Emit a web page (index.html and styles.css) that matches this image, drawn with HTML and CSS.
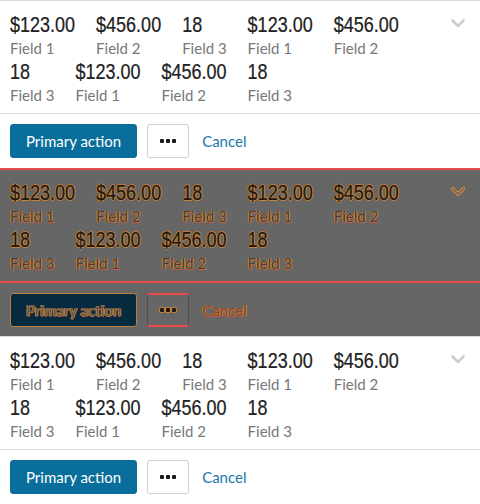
FILE: index.html
```html
<!DOCTYPE html>
<html lang="en">
<head>
<meta charset="utf-8">
<title>Summary cards</title>
<link rel="stylesheet" href="styles.css">
</head>
<body>
<div class="panel">
  <div class="body">
    <div class="fields">
      <div class="field"><div class="value">$123.00</div><div class="label">Field 1</div></div>
      <div class="field"><div class="value">$456.00</div><div class="label">Field 2</div></div>
      <div class="field"><div class="value">18</div><div class="label">Field 3</div></div>
      <div class="field"><div class="value">$123.00</div><div class="label">Field 1</div></div>
      <div class="field"><div class="value">$456.00</div><div class="label">Field 2</div></div>
      <div class="field"><div class="value">18</div><div class="label">Field 3</div></div>
      <div class="field"><div class="value">$123.00</div><div class="label">Field 1</div></div>
      <div class="field"><div class="value">$456.00</div><div class="label">Field 2</div></div>
      <div class="field"><div class="value">18</div><div class="label">Field 3</div></div>
    </div>
    <button class="toggle" aria-label="Expand"><svg width="14" height="9" viewBox="0 0 14 9"><polyline class="chev-outer" points="1.5,1.5 7,7 12.5,1.5"/><polyline class="chev" points="1.5,1.5 7,7 12.5,1.5"/></svg></button>
  </div>
  <div class="footer">
    <button class="btn-primary">Primary action</button>
    <button class="btn-more" aria-label="More"><span class="dot"></span><span class="dot"></span><span class="dot"></span></button>
    <button class="btn-link">Cancel</button>
  </div>
</div>

<div class="panel debug">
  <div class="body">
    <div class="fields">
      <div class="field"><div class="value">$123.00</div><div class="label">Field 1</div></div>
      <div class="field"><div class="value">$456.00</div><div class="label">Field 2</div></div>
      <div class="field"><div class="value">18</div><div class="label">Field 3</div></div>
      <div class="field"><div class="value">$123.00</div><div class="label">Field 1</div></div>
      <div class="field"><div class="value">$456.00</div><div class="label">Field 2</div></div>
      <div class="field"><div class="value">18</div><div class="label">Field 3</div></div>
      <div class="field"><div class="value">$123.00</div><div class="label">Field 1</div></div>
      <div class="field"><div class="value">$456.00</div><div class="label">Field 2</div></div>
      <div class="field"><div class="value">18</div><div class="label">Field 3</div></div>
    </div>
    <button class="toggle" aria-label="Expand"><svg width="14" height="9" viewBox="0 0 14 9"><polyline class="chev-outer" points="1.5,1.5 7,7 12.5,1.5"/><polyline class="chev" points="1.5,1.5 7,7 12.5,1.5"/></svg></button>
  </div>
  <div class="footer">
    <button class="btn-primary">Primary action</button>
    <button class="btn-more" aria-label="More"><span class="dot"></span><span class="dot"></span><span class="dot"></span></button>
    <button class="btn-link">Cancel</button>
  </div>
</div>

<div class="panel">
  <div class="body">
    <div class="fields">
      <div class="field"><div class="value">$123.00</div><div class="label">Field 1</div></div>
      <div class="field"><div class="value">$456.00</div><div class="label">Field 2</div></div>
      <div class="field"><div class="value">18</div><div class="label">Field 3</div></div>
      <div class="field"><div class="value">$123.00</div><div class="label">Field 1</div></div>
      <div class="field"><div class="value">$456.00</div><div class="label">Field 2</div></div>
      <div class="field"><div class="value">18</div><div class="label">Field 3</div></div>
      <div class="field"><div class="value">$123.00</div><div class="label">Field 1</div></div>
      <div class="field"><div class="value">$456.00</div><div class="label">Field 2</div></div>
      <div class="field"><div class="value">18</div><div class="label">Field 3</div></div>
    </div>
    <button class="toggle" aria-label="Expand"><svg width="14" height="9" viewBox="0 0 14 9"><polyline class="chev-outer" points="1.5,1.5 7,7 12.5,1.5"/><polyline class="chev" points="1.5,1.5 7,7 12.5,1.5"/></svg></button>
  </div>
  <div class="footer">
    <button class="btn-primary">Primary action</button>
    <button class="btn-more" aria-label="More"><span class="dot"></span><span class="dot"></span><span class="dot"></span></button>
    <button class="btn-link">Cancel</button>
  </div>
</div>
</body>
</html>
```

FILE: styles.css
```css
* { box-sizing: border-box; }

html, body {
  margin: 0;
  padding: 0;
  background: #ffffff;
  font-family: Lato, "Noto Sans", sans-serif;
}

.panel {
  border-top: 1px solid #dcdcdc;
  background: #ffffff;
}

.body {
  display: flex;
  align-items: flex-start;
  padding: 11px 10px 7px 10px;
}

.fields {
  flex: 1;
  display: flex;
  flex-wrap: wrap;
  column-gap: 21px;
  min-width: 0;
}

.field {
  display: flex;
  flex-direction: column;
}

/* Condensed numeral look: narrow advance, tall glyphs */
.value {
  font-family: "Liberation Sans", Arial, sans-serif;
  font-size: 18px;
  line-height: 25px;
  color: #222222;
  white-space: nowrap;
  transform: scaleY(1.24);
  transform-origin: 0 9px;
  -webkit-text-stroke: 0.2px #222222;
}

.label {
  font-size: 15px;
  line-height: 22px;
  color: #777777;
  white-space: nowrap;
}

.toggle {
  flex: none;
  width: 24px;
  height: 22px;
  margin-left: 6px;
  padding: 0;
  border: 0;
  background: transparent;
  display: flex;
  align-items: center;
  justify-content: center;
}

.toggle svg { display: block; }

.chev, .chev-outer {
  fill: none;
  stroke-linecap: round;
  stroke-linejoin: round;
}

.chev { stroke: #cccccc; stroke-width: 2.6; }
.chev-outer { stroke: transparent; stroke-width: 4.5; }

.footer {
  display: flex;
  align-items: center;
  gap: 10px;
  border-top: 1px solid #dcdcdc;
  padding: 10px;
}

.btn-primary {
  height: 34px;
  padding: 0 15px;
  border: 1px solid #0a6e9c;
  border-radius: 3px;
  background: #0a6e9c;
  color: #ffffff;
  font-family: Lato, sans-serif;
  font-size: 15px;
}

.btn-more {
  width: 42px;
  height: 34px;
  padding: 0;
  border: 1px solid #cfcfcf;
  border-radius: 3px;
  background: #ffffff;
  display: flex;
  align-items: center;
  justify-content: center;
  gap: 2px;
}

.dot {
  width: 4px;
  height: 4px;
  border-radius: 1px;
  background: #1a1a1a;
}

.btn-link {
  height: 34px;
  padding: 0 3px;
  border: 0;
  background: transparent;
  color: #1a78a8;
  font-family: Lato, sans-serif;
  font-size: 15px;
}

/* Highlighted (inspected) panel */
.debug {
  background: #666666;
  border-top: 2px solid #e84a4a;
}

.debug .body { padding-top: 10px; }

.debug .value {
  color: #1a1a1a;
  -webkit-text-stroke: 0.2px #1a1a1a;
  text-shadow: 1px 0 0 #c98331, -1px 0 0 #c98331, 0 1px 0 #c98331, 0 -1px 0 #d0702c;
}

.debug .label {
  color: #3f3f3f;
  text-shadow: 1px 0 0 #c98331, -1px 0 0 #c98331, 0 1px 0 #d95a3a;
}

.debug .chev { stroke: #666666; stroke-width: 1.4; }
.debug .chev-outer { stroke: #d08a36; stroke-width: 3.8; }

.debug .footer {
  border-top: 2px solid #e84a4a;
  padding-bottom: 9px;
}

.debug .btn-primary {
  background: #062a40;
  border: 1px solid #b8803a;
  color: #555555;
  text-shadow: 1px 0 0 #c98331, -1px 0 0 #c98331, 0 1px 0 #d95a3a;
}

.debug .btn-more {
  background: transparent;
  border-left: 1px solid #505050;
  border-right: 1px solid #505050;
  border-top: 2px solid #e84a4a;
  border-bottom: 2px solid #e84a4a;
  border-radius: 0;
}

.debug .dot {
  background: #1a1a1a;
  box-shadow: 0 0 0 1px #c98331;
}

.debug .btn-link {
  color: #6a4a3a;
  text-shadow: 1px 0 0 #d07a31, -1px 0 0 #d07a31, 0 1px 0 #e0503a;
}
```
